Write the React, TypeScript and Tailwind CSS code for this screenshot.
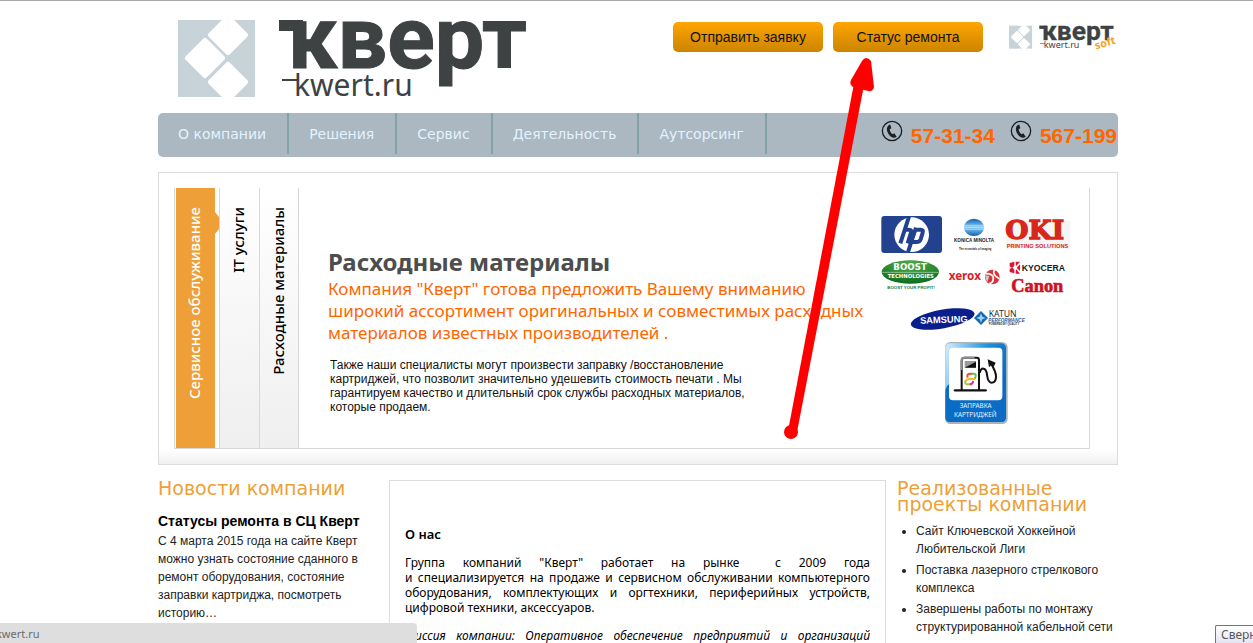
import { useState } from 'react';
import { clsx } from 'clsx';

const navItems = ['О компании', 'Решения', 'Сервис', 'Деятельность', 'Аутсорсинг'];

const phones = ['57-31-34', '567-199'];

const tabs = [
    { id: 'service', label: 'Сервисное обслуживание' },
    { id: 'it', label: 'IT услуги' },
    { id: 'supplies', label: 'Расходные материалы' },
];

const aboutLines = [
    'Группа компаний "Кверт" работает на рынке \u00a0с 2009 года',
    'и специализируется на продаже и сервисном обслуживании компьютерного',
    'оборудования, комплектующих и оргтехники, периферийных устройств,',
];

const projects = [
    'Сайт Ключевской Хоккейной Любительской Лиги',
    'Поставка лазерного стрелкового комплекса',
    'Завершены работы по монтажу структурированной кабельной сети',
];

function Logo({ className, soft = false }: { className?: string; soft?: boolean }) {
    return (
        <svg viewBox="0 0 350 90" className={className} role="img" aria-label="Кверт">
            <rect x="0" y="2" width="77" height="77" fill="#c8d2d9" />
            <g fill="#fff">
                <rect x="35" y="2" width="30" height="30" rx="3" transform="rotate(45 50 17)" />
                <rect x="12" y="25" width="30" height="30" rx="3" transform="rotate(45 27 40)" />
                <rect x="35" y="49" width="30" height="30" rx="3" transform="rotate(45 50 64)" />
                <rect x="30" y="-10" width="40" height="12" />
                <rect x="30" y="79" width="40" height="11" />
            </g>
            <g fill="#3e4243">
                <rect x="101" y="2" width="24" height="11" />
                <text x="110" y="50" fontSize="88" stroke="#3e4243" strokeWidth="1" className="font-['Roboto'] font-bold">кверт</text>
                <rect x="104" y="61" width="16" height="2" />
                <text x="116" y="78" fontSize="30" className="font-['Noto_Sans']">kwert.ru</text>
            </g>
            {soft && (
                <text x="290" y="82" fontSize="36" fill="#f5a21b" transform="rotate(-17 290 82)" className="font-['Noto_Sans'] font-bold">
                    soft
                </text>
            )}
        </svg>
    );
}

function PhoneIcon() {
    return (
        <svg viewBox="0 0 66 66" className="size-[22px]" aria-hidden="true">
            <circle cx="33" cy="33" r="29" fill="none" stroke="#1c1f22" strokeWidth="4" />
            <path
                d="M25 14c-7 4-9 12-6 21 4 10 11 17 20 18 3 0 6-1 8-3l-7-10-5 3c-4-2-9-10-9-15l5-3-3-11z"
                fill="#1c1f22"
            />
        </svg>
    );
}

function Brands() {
    return (
        <svg viewBox="54 36 588 360" className="h-[120px] w-[196px]" role="img" aria-label="Производители">
            <defs>
                <radialGradient id="boost" cx="0.5" cy="0.2" r="0.8">
                    <stop offset="0" stopColor="#4fae4a" />
                    <stop offset="1" stopColor="#0d6b1d" />
                </radialGradient>
                <linearGradient id="globe" x1="0" y1="0" x2="0" y2="1">
                    <stop offset="0" stopColor="#0a5fb4" />
                    <stop offset="0.5" stopColor="#8fd0f5" />
                    <stop offset="1" stopColor="#0a5fb4" />
                </linearGradient>
            </defs>

            {/* HP */}
            <rect x="64" y="48" width="182" height="111" rx="9" fill="#22418f" />
            <circle cx="155" cy="104" r="52" fill="#fff" />
            <g fill="none" stroke="#22418f" strokeWidth="12">
                <path d="M147 50l-26 80M130 89h17q9 0 6 9l-10 32" />
                <path d="M168 83l-24 73M165 89h17q9 0 6 9l-6 20q-3 8-12 8h-16" />
            </g>

            {/* Konica Minolta */}
            <ellipse cx="342" cy="82" rx="30" ry="26" fill="url(#globe)" />
            <path d="M314 76h56M314 82h56M314 88h56" stroke="#fff" strokeWidth="2" opacity="0.6" />
            <text x="282" y="126" fontSize="14" fill="#222" className="font-['Liberation_Sans'] font-bold">KONICA MINOLTA</text>
            <text x="297" y="151" fontSize="8" fill="#222" className="font-['Liberation_Sans'] font-bold">The essentials of imaging</text>

            {/* OKI */}
            <rect x="438" y="62" width="192" height="86" fill="#f3f6f4" />
            <text x="436" y="118" fontSize="80" fill="#d8261c" stroke="#d8261c" strokeWidth="4" className="font-['DejaVu_Serif'] font-bold">OKI</text>
            <text x="440" y="145" fontSize="17" fill="#d8261c" className="font-['Liberation_Sans'] font-bold">PRINTING SOLUTIONS</text>

            {/* Boost */}
            <ellipse cx="151" cy="216" rx="86" ry="35" fill="url(#boost)" />
            <path d="M67 217h168" stroke="#b9dfb5" strokeWidth="2" />
            <text x="100" y="209" fontSize="26" fill="#fff" className="font-['DejaVu_Sans'] font-bold">BOOST</text>
            <text x="83" y="233" fontSize="16" fill="#fff" className="font-['DejaVu_Sans'] font-bold">TECHNOLOGIES</text>
            <text x="82" y="268" fontSize="13" fill="#1c7a3a" className="font-['Liberation_Sans'] font-bold">BOOST YOUR PROFIT!</text>

            {/* Xerox */}
            <text x="266" y="241" fontSize="35" fill="#d9222a" className="font-['Noto_Sans'] font-bold">xerox</text>
            <circle cx="397" cy="231" r="22" fill="#d9323a" />
            <path d="M378 221q22 0 22 14t-12 16M403 210q-8 14 15 26" fill="none" stroke="#fff" strokeWidth="5" />
            <path d="M376 226l12 2-6 18q-6-8-6-20z" fill="#c9ced3" />

            {/* Kyocera */}
            <path d="M449 189l14-4v12l-6 6 6 6v11l-14-4v-9l6-4-6-4zM467 185h13l-12 14zM467 221h13l-12-14zM470 203l10-10v20z" fill="#e0142c" />
            <text x="485" y="214" fontSize="26" fill="#171717" className="font-['Liberation_Sans'] font-bold">KYOCERA</text>

            {/* Canon */}
            <text x="454" y="275" fontSize="55" fill="#cf1126" stroke="#cf1126" strokeWidth="2" className="font-['Liberation_Serif'] font-bold">Canon</text>

            {/* Samsung */}
            <ellipse cx="248" cy="357" rx="97" ry="28" fill="#0b1f8c" transform="rotate(-10 248 357)" />
            <text x="180" y="369" fontSize="28" fill="#fff" transform="rotate(-2 248 357)" className="font-['Liberation_Sans'] font-bold">SAMSUNG</text>

            {/* Katun */}
            <path d="M363 333l21 21-21 21-21-21z" fill="#1768ae" />
            <path d="M363 340l4 10 10 4-10 4-4 10-4-10-10-4 10-4z" fill="#9bd4f4" />
            <text x="386" y="350" fontSize="26" fill="#2b2b33" className="font-['Noto_Sans']">KATUN</text>
            <text x="385" y="365" fontSize="14" fill="#1d5fa8" className="font-['Liberation_Sans'] font-bold italic">PERFORMANCE</text>
            <text x="386" y="374" fontSize="8" fill="#333" className="font-['Liberation_Sans'] font-bold">POWERED BY QUALITY</text>
        </svg>
    );
}

function RefillBadge() {
    return (
        <svg viewBox="249 123 192 252" className="h-[84px] w-[64px]" role="img" aria-label="Заправка картриджей">
            <defs>
                <linearGradient id="badge" x1="0" y1="0" x2="1" y2="0.4">
                    <stop offset="0" stopColor="#d9effb" />
                    <stop offset="0.6" stopColor="#1e93dc" />
                    <stop offset="1" stopColor="#0a6cc4" />
                </linearGradient>
            </defs>
            <rect x="252" y="126" width="188" height="246" rx="16" fill="#a9b3ba" />
            <rect x="253" y="130" width="182" height="236" rx="14" fill="url(#badge)" />
            <path d="M253 270q4-14 14-20h168v102q0 14-14 14H267q-14 0-14-14z" fill="#0a6cc4" />
            <rect x="264" y="143" width="160" height="158" rx="12" fill="#fff" />
            <path d="M282 271h92" stroke="#111" strokeWidth="7" strokeLinecap="round" />
            <path d="M302 271v-89q0-9 9-9h36q7 0 7 7v91" fill="none" stroke="#111" strokeWidth="6" />
            <path d="M302 210v-28q0-9 9-9h30" fill="none" stroke="#8d8d8d" strokeWidth="6" />
            <rect x="311" y="183" width="34" height="20" fill="#9a9a9a" />
            <path d="M311 203l34-18v18z" fill="#111" />
            <g fill="none" strokeWidth="6">
                <path d="M320 233q-4-12 8-12h6" stroke="#f04a3a" />
                <path d="M332 221h6q8 0 6 8l-3 8" stroke="#6cc04a" />
                <path d="M342 237h-18q-8 0-11 8" stroke="#f3c01c" />
                <path d="M313 243q-2 10 7 10h8" stroke="#9bc93a" />
                <path d="M326 253q9 0 11-10" stroke="#e02b90" />
            </g>
            <path d="M356 218q4-14 12-12 8 1 10 18 3 24 13 24 14 0 14-18 0-16-17-42" fill="none" stroke="#111" strokeWidth="6" />
            <path d="M380 178l24 10-6 12-8-4-6 6z" fill="#111" />
            <text x="344" y="325" fontSize="19" textAnchor="middle" fill="#e8f4fc" className="font-['Noto_Sans']">ЗАПРАВКА</text>
            <text x="343" y="352" fontSize="19" textAnchor="middle" fill="#e8f4fc" className="font-['Noto_Sans']">КАРТРИДЖЕЙ</text>
        </svg>
    );
}

function Header() {
    return (
        <header className="flex h-28 items-start justify-between pl-5">
            <a href="#home" className="mt-[17px]">
                <Logo className="h-[90px] w-[350px]" />
            </a>
            <div className="flex items-start pt-[21px]">
                <div className="flex gap-2.5">
                    {['Отправить заявку', 'Статус ремонта'].map((label) => (
                        <button
                            key={label}
                            className="h-[30px] w-[150px] rounded-[5px] bg-linear-to-b from-[#ffa500] to-[#cc8400] text-[14px] text-[#111]"
                        >
                            {label}
                        </button>
                    ))}
                </div>
                <a href="#soft" className="mt-[3px] mr-1 ml-[26px]">
                    <Logo soft className="h-[27px] w-[105px] overflow-visible" />
                </a>
            </div>
        </header>
    );
}

function Nav() {
    return (
        <nav className="flex h-11 items-start justify-between rounded-[5px] bg-[#abb7c1]">
            <ul className="flex">
                {navItems.map((item) => (
                    <li key={item}>
                        <a
                            href="#nav"
                            className="flex h-[41px] items-center border-r-2 border-[#84a3a5] pt-px pr-[21px] pl-5 font-['DejaVu_Sans',sans-serif] text-[14px] text-[#e2f3ff]"
                        >
                            {item}
                        </a>
                    </li>
                ))}
            </ul>
            <div className="flex gap-[15px] pt-[7px] pr-px">
                {phones.map((phone) => (
                    <div key={phone} className="flex items-start gap-2">
                        <PhoneIcon />
                        <span className="pt-0.5 text-[21px] leading-7 font-bold text-[#ff6600]">{phone}</span>
                    </div>
                ))}
            </div>
        </nav>
    );
}

function Slider() {
    const [active, setActive] = useState('service');

    return (
        <section className="mt-[15px] border border-[#dddddd] bg-linear-to-b from-white from-95% to-[#f0f0f0] pt-[15px] pr-[27px] pb-[15px] pl-[15px]">
            <div className="flex h-[261px] border-x border-b border-[#d8d8d8] bg-white pl-px">
                <div className="flex">
                    {tabs.map((tab) => (
                        <button
                            key={tab.id}
                            onClick={() => setActive(tab.id)}
                            className={clsx(
                                "relative flex items-start justify-center pt-[19px] pr-[3px] font-['Noto_Sans',sans-serif] text-[15px] leading-5 font-medium",
                                active === tab.id
                                    ? 'mr-1 w-[39px] bg-[#ee9f37] text-white'
                                    : 'w-10 border-l border-[#d8d8d8] bg-linear-to-b from-white to-[#efefef] text-black last:border-r'
                            )}
                        >
                            <span className="rotate-180 [writing-mode:vertical-rl]">{tab.label}</span>
                            {active === tab.id && (
                                <svg viewBox="0 0 4 22" className="absolute top-6 left-full h-[22px] w-1" aria-hidden="true">
                                    <path d="M0 0l4 5v12l-4 5z" fill="#ee9f37" />
                                </svg>
                            )}
                        </button>
                    ))}
                </div>
                <div className="flex flex-1 justify-between pr-[15px] pl-[29px]">
                    <div className="pt-[59px] whitespace-nowrap">
                        <h1 className="mb-px font-['Noto_Sans',sans-serif] text-[24px] leading-[30px] font-bold text-[#4d4d4d]">
                            Расходные материалы
                        </h1>
                        <p className="font-['Noto_Sans',sans-serif] text-[17px] leading-[22px] text-[#ff6600]">
                            Компания "Кверт" готова предложить Вашему вниманию
                            <br />
                            широкий ассортимент оригинальных и совместимых расходных
                            <br />
                            материалов известных производителей .
                        </p>
                        <p className="mt-3.5 pl-0.5 text-[12px] leading-[14px] text-[#111]">
                            Также наши специалисты могут произвести заправку /восстановление
                            <br />
                            картриджей, что позволит значительно удешевить стоимость печати . Мы
                            <br />
                            гарантируем качество и длительный срок службы расходных материалов,
                            <br />
                            которые продаем.
                        </p>
                    </div>
                    <div className="flex shrink-0 flex-col items-center gap-[9px] pt-6">
                        <Brands />
                        <RefillBadge />
                    </div>
                </div>
            </div>
        </section>
    );
}

function ColumnTitle({ children }: { children: string }) {
    return (
        <h2 className="font-['DejaVu_Sans',sans-serif] text-[19px] leading-4 text-[#ee9f37]">{children}</h2>
    );
}

function PointerArrow() {
    return (
        <svg viewBox="783 56 96 384" className="pointer-events-none absolute top-[55px] left-[783px] h-[384px] w-[96px]" aria-hidden="true">
            <g fill="#f00">
                <circle cx="791" cy="432" r="7" />
                <path d="M788 431l67-353 10 2-68 352z" />
                <path d="M862 61q4-6 9 0l3 26q-1 5-6 4l-15-4q-4-2-2-7z" />
            </g>
        </svg>
    );
}

export default function App() {
    return (
        <div className="relative h-screen overflow-hidden border-t border-[#a9a9a9] bg-white pl-[23px] font-['Liberation_Sans',Arial,sans-serif] text-black">
            <div className="mx-auto max-w-[960px]">
                <Header />
                <Nav />
                <Slider />

                <main className="mt-[15px] flex items-start">
                    <section className="w-[231px] shrink-0">
                        <ColumnTitle>Новости компании</ColumnTitle>
                        <h3 className="mt-[15px] mb-px text-[14px] leading-5 font-bold">
                            <a href="#news">Статусы ремонта в СЦ Кверт</a>
                        </h3>
                        <p className="w-[210px] text-[12px] leading-[18px] text-[#222]">
                            С 4 марта 2015 года на сайте Кверт можно узнать состояние сданного в ремонт оборудования, состояние
                            заправки картриджа, посмотреть историю…
                        </p>
                    </section>

                    <section className="h-[300px] flex-1 border border-[#dddddd] px-[15px] pt-[46px] text-justify font-['Noto_Sans',sans-serif] text-[12px] leading-[15px]">
                        <h3 className="text-[13px] leading-[15px] font-semibold">О нас</h3>
                        <p className="mt-[13px]">
                            {aboutLines.map((line) => (
                                <span key={line} className="block [text-align-last:justify]">{line}</span>
                            ))}
                            цифровой техники, аксессуаров.
                        </p>
                        <p className="mt-[13px] italic">
                            Миссия компании: Оперативное обеспечение предприятий и организаций качественной техникой.
                        </p>
                    </section>

                    <section className="ml-[11px] w-[221px] shrink-0">
                        <ColumnTitle>Реализованные проекты компании</ColumnTitle>
                        <ul className="mt-2.5 list-disc space-y-[3px] pl-[19px] text-[12px] leading-[18px] text-[#222]">
                            {projects.map((project) => (
                                <li key={project}>{project}</li>
                            ))}
                        </ul>
                    </section>
                </main>
            </div>

            <PointerArrow />

            {/* Browser status bar and window hint */}
            <div className="absolute bottom-0 left-0 h-5 w-[417px] overflow-hidden rounded-tr-[4px] bg-[#dedede] text-[11px] leading-[22px] text-[#6b6b6b]">
                <span className="-ml-1 font-['Noto_Sans',sans-serif]">kwert.ru</span>
            </div>
            <div className="absolute right-0 bottom-0 h-[18px] w-[38px] overflow-hidden rounded-tl-[2px] border-t border-l border-[#767676] bg-linear-to-b from-white to-[#e4e5f0] pl-[5px] font-['Noto_Sans',sans-serif] text-[12px] leading-[18px] whitespace-nowrap text-[#575757]">
                Свернуть
            </div>
        </div>
    );
}
